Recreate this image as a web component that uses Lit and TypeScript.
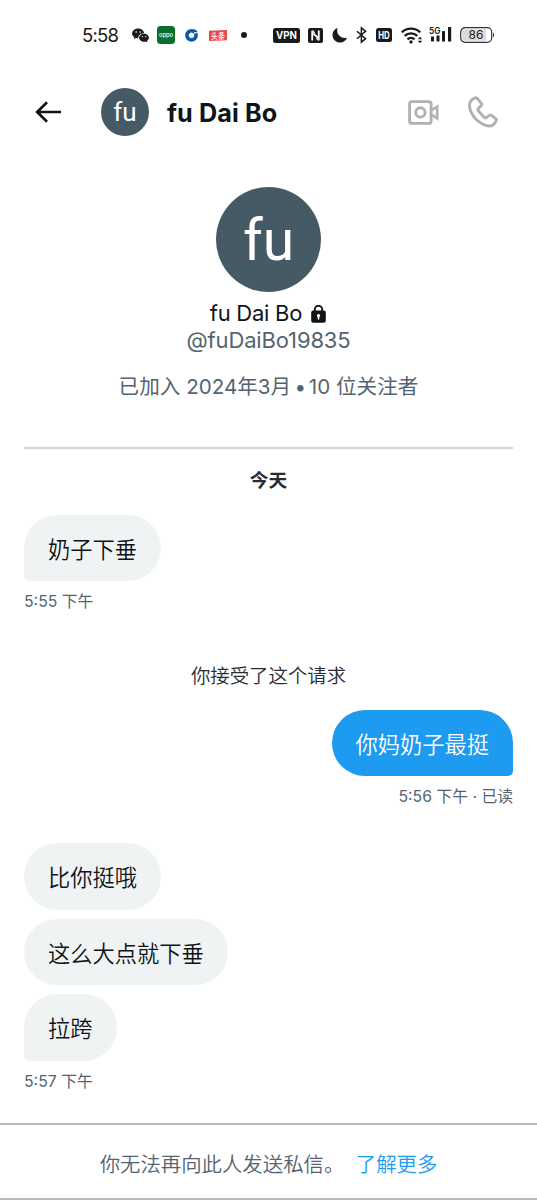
import { LitElement, html, css } from "lit";
import { customElement } from "lit/decorators.js";

type Message = { text: string; mine?: boolean; tail?: boolean };

@customElement("status-bar")
class StatusBar extends LitElement {
  static styles = css`
    :host { display: flex; align-items: center; height: 70px; padding-left: 82px; color: #1a1a1a; font-family: "Inter", sans-serif; }
    svg { display: block; flex: none; overflow: visible; }
    .time { width: 50px; font-size: 18.5px; letter-spacing: -0.75px; line-height: 24px; white-space: nowrap; }
    .g6 { margin-right: 6px; } .g8 { margin-right: 8px; } .g9 { margin-right: 9px; }
    .g10 { margin-right: 10px; } .g14 { margin-right: 14px; } .g26 { margin-right: 26px; }
    text { font-family: "Inter", sans-serif; }
    .cjk { font-family: "Noto Sans CJK SC", sans-serif; }
  `;
  render() {
    return html`
      <span class="time">5:58</span>
      <svg class="g8" width="17" height="15" viewBox="0 0 17 15">
        <path fill="#1a1a1a" d="M6.2 .6C2.8.6.1 2.8.1 5.5c0 1.6.9 2.9 2.3 3.8l-.6 1.900 2.200-1.100c.7.2 1.400.3 2.200.3-.2-3.100 2.400-5.300 6-5.200C11.700 2.500 9.200.6 6.200.6z"/>
        <path fill="#1a1a1a" d="M16.900 9.700c0-2.200-2.200-4-4.900-4s-4.900 1.800-4.900 4 2.200 4 4.900 4c.6 0 1.200-.1 1.700-.2l1.800 1-.5-1.600c1.200-.8 1.900-1.900 1.900-3.200z"/>
        <g fill="#fff"><circle cx="4.200" cy="4" r=".8"/><circle cx="8.200" cy="4" r=".8"/><circle cx="10.400" cy="8.600" r=".65"/><circle cx="13.700" cy="8.600" r=".65"/></g>
      </svg>
      <svg class="g10" width="18" height="18" viewBox="0 0 18 18">
        <rect width="18" height="18" rx="3.500" fill="#08702f"/>
        <text x="9" y="10.700" font-size="5.800" font-weight="500" fill="#fff" text-anchor="middle" textLength="14" lengthAdjust="spacingAndGlyphs">oppo</text>
      </svg>
      <svg class="g10" width="14" height="14" viewBox="0 0 14 14">
        <circle cx="6.500" cy="7.300" r="4.500" fill="none" stroke="#1157a8" stroke-width="3.800"/>
        <path d="M8.500 5.800L10.600 0H14v4.800z" fill="#fff"/>
        <path d="M8.800.9q2.900.8 4 3.300H8.800z" fill="#1157a8"/>
        <path d="M6.500 4.300l3 3-3 3-3-3z" fill="#fff"/>
      </svg>
      <svg class="g14" width="18" height="11" viewBox="0 0 18 11">
        <path d="M0 .8L18 0v10.200L0 11z" fill="#ef4748"/>
        <text class="cjk" x="9" y="8.600" font-size="8" font-weight="500" fill="#fff" text-anchor="middle" textLength="14" lengthAdjust="spacingAndGlyphs">头条</text>
      </svg>
      <svg class="g26" width="6" height="6" viewBox="0 0 6 6"><circle cx="3" cy="3" r="3" fill="#1a1a1a"/></svg>
      <svg class="g8" width="27" height="15" viewBox="0 0 27 15">
        <rect width="27" height="15" rx="2.500" fill="#1a1a1a"/>
        <text x="13.500" y="11.400" font-size="10.500" font-weight="700" fill="#fff" text-anchor="middle" textLength="21" lengthAdjust="spacingAndGlyphs">VPN</text>
      </svg>
      <svg class="g9" width="15" height="15" viewBox="0 0 15 15">
        <rect width="15" height="15" rx="2" fill="#1a1a1a"/>
        <path d="M4.200 12.500V4.500L10.800 10.500V2.500" fill="none" stroke="#fff" stroke-width="1.800"/>
        <path d="M4.200 2.500l2.500 2.200M10.800 12.500L8.300 10.300" stroke="#fff" stroke-width="1.200"/>
      </svg>
      <svg class="g9" width="15" height="15" viewBox="0 0 15 15"><path d="M5.600 0A7.500 7.500 0 1 0 15 9.700 7.600 7.600 0 0 1 5.600 0z" fill="#1a1a1a"/></svg>
      <svg class="g9" width="11" height="16" viewBox="0 0 11 16"><path d="M.9 4.300l8.700 7.400-4.200 3.400V.9l4.200 3.400L.9 11.700" fill="none" stroke="#1a1a1a" stroke-width="1.500"/></svg>
      <svg class="g9" width="16" height="14" viewBox="0 0 16 14">
        <rect width="16" height="14" rx="2.500" fill="#1a1a1a"/>
        <text x="8" y="10.600" font-size="10" font-weight="700" fill="#fff" text-anchor="middle" textLength="11.500" lengthAdjust="spacingAndGlyphs">HD</text>
      </svg>
      <svg class="g6" width="22" height="17" viewBox="0 0 22 17">
        <g fill="none" stroke="#1a1a1a" stroke-width="2.300"><path d="M.8 5.300a13.500 13.500 0 0 1 18.400 0"/><path d="M3.700 8.900a9.300 9.300 0 0 1 12.600 0"/><path d="M6.500 12.300a5.200 5.200 0 0 1 7 0"/></g>
        <circle cx="10" cy="14.900" r="1.700" fill="#1a1a1a"/>
        <path d="M16.800 12.200l2.200-2.500 2.200 2.500zM16.800 13.700l2.200 2.500 2.200-2.500z" fill="#1a1a1a"/>
      </svg>
      <svg class="g8" width="23" height="20" viewBox="0 0 23 20">
        <g fill="#1a1a1a"><rect x="2" y="11.500" width="3" height="5" rx=".5"/><rect x="7.500" y="10.500" width="3" height="6" rx=".5"/><rect x="13" y="6" width="3" height="10.500" rx=".5"/><rect x="19" y="2" width="3.200" height="14.500" rx=".5"/></g>
        <text x="0" y="9" font-size="9.500" font-weight="600" fill="#1a1a1a" textLength="11.500" lengthAdjust="spacingAndGlyphs">5G</text>
      </svg>
      <svg width="35" height="16" viewBox="0 0 35 16">
        <rect x=".7" y=".7" width="31" height="14.600" rx="4.500" fill="#fff" stroke="#333" stroke-width="1.200"/>
        <path d="M5 2.300h21v11.400H5A2.800 2.800 0 0 1 2.300 11V5A2.800 2.800 0 0 1 5 2.300z" fill="#dcdcdc"/>
        <path d="M33 5.500q1 .5 1 2.500t-1 2.500z" fill="#333"/>
        <text x="16" y="12.300" font-size="12" fill="#222" text-anchor="middle">86</text>
      </svg>`;
  }
}

@customElement("chat-header")
class ChatHeader extends LitElement {
  static styles = css`
    :host { display: flex; align-items: center; height: 84px; padding: 0 39px 0 35px; color: #0f1419; }
    svg { display: block; flex: none; }
    .avatar { display: grid; place-items: center; width: 48px; height: 48px; margin: 0 18px 0 39px; border-radius: 50%; background: #455a64; color: #fff; font: 26px/49px "Roboto", sans-serif; }
    .name { flex: 1; padding-top: 1px; font: 650 25.200px/30px "Inter", sans-serif; letter-spacing: 0.1px; white-space: nowrap; }
    .video { margin-right: 29px; }
  `;
  render() {
    return html`
      <svg width="27" height="22" viewBox="0 0 27 22"><path d="M26 11H3M12 1.200L2.200 11 12 20.800" fill="none" stroke="#0f1419" stroke-width="2.700"/></svg>
      <div class="avatar">fu</div>
      <div class="name">fu Dai Bo</div>
      <svg class="video" width="31" height="25" viewBox="0 0 31 25" fill="none" stroke="#b0b1b3" stroke-width="2.900">
        <rect x="1.600" y="1.600" width="21.500" height="21.800" rx="2.500"/><circle cx="12.400" cy="12.500" r="4.700"/><path d="M23.200 10.500l6-3.800v11.600l-6-3.800" stroke-width="2.600"/>
      </svg>
      <svg width="30" height="32" viewBox="0 0 30 32" fill="none" stroke="#b0b1b3" stroke-width="2.900" stroke-linejoin="round">
        <path d="M6.100 2.400Q8 1.100 9.500 2.700L13.500 7.600Q14.200 8.600 13.300 9.500L10.700 12.100Q9.300 13.500 10.700 15.300L15.800 21Q17.300 22.500 18.800 21.300L21.300 19.300Q22.300 18.500 23.300 19.200L28 22.800Q28.800 23.600 28.200 24.500L27.300 26.100Q25.200 30.600 20.700 30Q13 28.700 7.300 22.500 1.200 15.500 1.500 8.700 2 4.200 6.100 2.400z"/>
      </svg>`;
  }
}

@customElement("profile-card")
class ProfileCard extends LitElement {
  static styles = css`
    :host { display: flex; flex-direction: column; align-items: center; height: 260px; padding-top: 32.500px; margin: 0 24px; border-bottom: 2px solid #d3d6d8; font-family: "Inter", "Noto Sans CJK SC", sans-serif; color: #536471; white-space: nowrap; }
    .avatar { display: grid; place-items: center; width: 105px; height: 105px; border-radius: 50%; background: #455a64; color: #fff; font: 57px/107px "Roboto", sans-serif; }
    .name { display: flex; align-items: center; gap: 9px; margin-top: 8.500px; color: #0f1419; font-size: 22px; line-height: 27px; letter-spacing: -0.25px; }
    .name span { margin-left: -1px; }
    .handle { font-size: 22px; line-height: 27px; letter-spacing: -0.15px; }
    .info { margin-top: 19px; font-size: 20.600px; line-height: 28px; font-weight: 370; }
    .dot { letter-spacing: -1.500px; margin: 0 0 0 -1px; }
  `;
  render() {
    return html`
      <div class="avatar">fu</div>
      <div class="name"><span>fu Dai Bo</span>
        <svg width="15" height="18" viewBox="0 0 15 18"><path d="M3.800 8V4.500a3.700 3.700 0 0 1 7.400 0V8" fill="none" stroke="#0f1419" stroke-width="1.900"/><rect x=".2" y="5.500" width="14.600" height="12.300" rx="2" fill="#0f1419"/><path d="M7.500 9a1.700 1.700 0 0 0-.8 3.200v2.300h1.600v-2.300A1.700 1.700 0 0 0 7.500 9z" fill="#fff"/></svg>
      </div>
      <div class="handle">@fuDaiBo19835</div>
      <div class="info">已加入 2024年3月<span class="dot"> • </span>10 位关注者</div>`;
  }
}

@customElement("message-group")
class MessageGroup extends LitElement {
  static properties = { messages: { attribute: false }, stamp: {} };
  declare messages: Message[];
  declare stamp: string;
  static styles = css`
    :host { display: flex; flex-direction: column; align-items: flex-start; gap: 9px; font-family: "Inter", "Noto Sans CJK SC", sans-serif; }
    .bubble { box-sizing: border-box; height: 66.500px; padding: 0 24px; border-radius: 33.250px; background: #eff3f4; color: #0f1419; font-size: 22.250px; line-height: 69px; font-weight: 350; white-space: nowrap; }
    .tail { border-bottom-left-radius: 5px; }
    .mine { align-self: flex-end; background: #1d9bf0; color: #fff; border-bottom-left-radius: 33.250px; border-bottom-right-radius: 5px; }
    .stamp { margin-top: 1px; font-size: 15.800px; line-height: 22px; color: #536471; font-weight: 370; }
    .right { align-self: flex-end; }
  `;
  render() {
    return html`
      ${this.messages.map((m) => html`<div class="bubble ${m.tail ? "tail" : ""} ${m.mine ? "mine" : ""}">${m.text}</div>`)}
      <div class="stamp ${this.messages[0].mine ? "right" : ""}">${this.stamp}</div>`;
  }
}

@customElement("app-root")
class AppRoot extends LitElement {
  static styles = css`
    :host { display: flex; flex-direction: column; box-sizing: border-box; height: 1200px; overflow: hidden; background: #fff; font-family: "Inter", "Noto Sans CJK SC", sans-serif; }
    .thread { flex: 1; padding: 0 24px; }
    .day { margin-top: 18.500px; text-align: center; font-size: 18.700px; line-height: 28px; font-weight: 700; color: #2a2d30; }
    .first { margin-top: 19.500px; }
    .system { margin-top: 48.500px; text-align: center; font-size: 19.400px; line-height: 28px; font-weight: 350; color: #2a2d30; }
    .second { margin-top: 20px; }
    .third { margin-top: 35px; }
    .footer { box-sizing: border-box; display: flex; justify-content: center; align-items: center; gap: 11.500px; height: 77px; border-top: 2px solid #b5babd; border-bottom: 2px solid #b5babd; padding-top: 6px; font-size: 20.400px; line-height: 28px; font-weight: 350; color: #536471; white-space: nowrap; }
    .link { color: #1d9bf0; }
  `;
  render() {
    return html`
      <status-bar></status-bar>
      <chat-header></chat-header>
      <profile-card></profile-card>
      <div class="thread">
        <div class="day">今天</div>
        <message-group class="first" .messages=${[{ text: "奶子下垂", tail: true }]} .stamp=${"5:55 下午"}></message-group>
        <div class="system">你接受了这个请求</div>
        <message-group class="second" .messages=${[{ text: "你妈奶子最挺", mine: true }]} .stamp=${"5:56 下午 · 已读"}></message-group>
        <message-group class="third" .messages=${[{ text: "比你挺哦" }, { text: "这么大点就下垂" }, { text: "拉跨", tail: true }]} .stamp=${"5:57 下午"}></message-group>
      </div>
      <div class="footer"><span>你无法再向此人发送私信。</span><span class="link">了解更多</span></div>`;
  }
}
